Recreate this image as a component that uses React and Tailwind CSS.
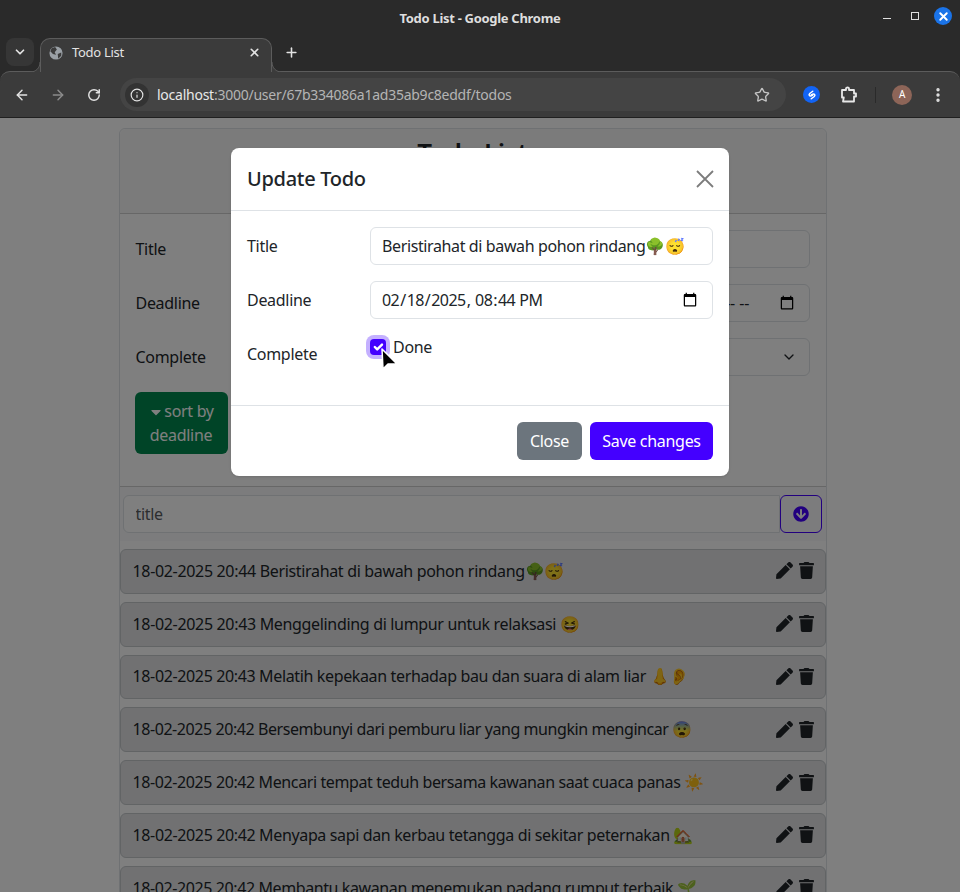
import React from 'react';
import { ArrowLeft, ArrowRight, ChevronDown, EllipsisVertical, Info, Plus, RotateCw, Star, X } from 'lucide-react';
import { FaArrowCircleDown, FaCaretDown, FaPen, FaTrash } from 'react-icons/fa';

const todos = [
    { text: '18-02-2025 20:44 Beristirahat di bawah pohon rindang🌳😴', fit: 'tracking-[-0.33px]' },
    { text: '18-02-2025 20:43 Menggelinding di lumpur untuk relaksasi 😆', fit: 'tracking-[-0.33px]' },
    { text: '18-02-2025 20:43 Melatih kepekaan terhadap bau dan suara di alam liar 👃👂', fit: 'tracking-[-0.36px]' },
    { text: '18-02-2025 20:42 Bersembunyi dari pemburu liar yang mungkin mengincar 😨', fit: 'tracking-[-0.43px]' },
    { text: '18-02-2025 20:42 Mencari tempat teduh bersama kawanan saat cuaca panas ☀️', fit: 'tracking-[-0.39px]' },
    { text: '18-02-2025 20:42 Menyapa sapi dan kerbau tetangga di sekitar peternakan 🏡', fit: 'tracking-[-0.36px]' },
    { text: '18-02-2025 20:42 Membantu kawanan menemukan padang rumput terbaik 🌱', fit: 'tracking-[-0.4px]' },
];

const BrowserChrome = () => (
    <div className="shrink-0 bg-[#2a2a2a] text-[#e3e3e3]">
        <div className="h-[36px] flex items-center justify-center relative text-[13px] font-bold text-[#dedede] pt-[1px]">
            Todo List - Google Chrome
            <div className="absolute right-[8px] top-[7px] flex items-center">
                <div className="w-[8px] h-[1px] bg-[#e0e0e0] mt-[5px] mr-[20px]"></div>
                <div className="w-[8px] h-[8px] border border-[#e0e0e0] mr-[15px]"></div>
                <div className="w-[18px] h-[18px] rounded-full bg-[#1a73e8] flex items-center justify-center">
                    <X className="w-[13px] h-[13px] text-white" strokeWidth={3.5} />
                </div>
            </div>
        </div>
        <div className="h-[35px] flex items-end pl-[6px] relative z-10">
            <div className="w-[28px] h-[28px] mb-[5px] rounded-lg bg-[#363636] flex items-center justify-center">
                <ChevronDown className="w-[14px] h-[14px]" strokeWidth={3} />
            </div>
            <div className="relative ml-[6px] w-[232px] h-[34px] -mb-[1px] pb-[6px] bg-[#3b3b3b] border border-b-0 border-[#5c5c5c] rounded-t-[10px] flex items-center pl-[8px] pr-[10px] text-[13px] text-[#e3e3e3]">
                <svg viewBox="0 0 16 16" className="w-[14px] h-[14px] shrink-0">
                    <circle cx="8" cy="8" r="7.5" fill="#9aa0a6" />
                    <path d="M3 2.5 L7 1 L9 4 L6.5 7 L8 10 L4.5 9 L1.5 6 Z M10 9 L14 7.5 L14 11 L10.5 14.5 Z" fill="#3b3b3b" />
                </svg>
                <span className="ml-[9px]">Todo List</span>
                <X className="w-[13px] h-[13px] ml-auto" strokeWidth={3} />
                <svg viewBox="0 0 10 10" className="absolute -left-[11px] bottom-0 w-[10px] h-[10px]">
                    <path d="M10 0 C10 6 6 10 0 10 L10 10 Z" fill="#3b3b3b" />
                    <path d="M10 0 C10 6 6 10 0 10" fill="none" stroke="#5c5c5c" />
                </svg>
                <svg viewBox="0 0 10 10" className="absolute -right-[11px] bottom-0 w-[10px] h-[10px]">
                    <path d="M0 0 C0 6 4 10 10 10 L0 10 Z" fill="#3b3b3b" />
                    <path d="M0 0 C0 6 4 10 10 10" fill="none" stroke="#5c5c5c" />
                </svg>
            </div>
            <Plus className="w-[15px] h-[15px] ml-[12px] mb-[11px]" strokeWidth={2.5} />
        </div>
        <div className="h-[47px] bg-[#3b3b3b] border-t border-[#5c5c5c] border-b-[#202020] border-b rounded-t-[10px] flex items-center pl-[14px]">
            <ArrowLeft className="w-[16px] h-[16px] shrink-0" strokeWidth={2.2} />
            <ArrowRight className="w-[16px] h-[16px] ml-[20px] text-[#8c8c8c] shrink-0" strokeWidth={2.2} />
            <RotateCw className="w-[14px] h-[14px] ml-[21px] shrink-0" strokeWidth={2.5} />
            <div className="ml-[19px] w-[666px] h-[33px] rounded-full bg-[#444444] flex items-center pl-[5px] pr-[16px] text-[14px] tracking-[-0.25px] shrink-0">
                <div className="w-[24px] h-[24px] rounded-full bg-[#333333] flex items-center justify-center shrink-0">
                    <Info className="w-[14px] h-[14px]" strokeWidth={2} />
                </div>
                <span className="ml-[8px] text-[#e8e8e8]">localhost<span className="text-[#b4b4b4]">:3000/user/67b334086a1ad35ab9c8eddf/todos</span></span>
                <Star className="w-[16px] h-[16px] ml-auto text-[#c4c4c4]" strokeWidth={2} />
            </div>
            <div className="ml-[17px] w-[17px] h-[17px] rounded-full bg-[#1264f5] flex items-center justify-center shrink-0">
                <svg viewBox="0 0 16 16" className="w-[12px] h-[12px]" fill="none" stroke="white" strokeWidth="2" strokeLinecap="round">
                    <path d="M9 3 L5 6 C3 8 5 10 7 9 L9 8" />
                    <path d="M7 13 L11 10 C13 8 11 6 9 7 L7 8" />
                </svg>
            </div>
            <svg viewBox="0 0 18 18" className="w-[18px] h-[18px] ml-[20px] shrink-0" fill="none" stroke="#e8e8e8" strokeWidth="1.8" strokeLinejoin="round">
                <path d="M2 4 H6 V2.5 C6 1 9 1 9 2.5 V4 H14 V7.5 H16 V10.5 H14 V15.5 H3 L3.8 11.5 H2 Z" />
            </svg>
            <div className="w-[1px] h-[16px] bg-[#2a2a2a] ml-[17px] shrink-0"></div>
            <div className="ml-[16px] w-[20px] h-[20px] rounded-full bg-[#8d6558] flex items-center justify-center text-[10px] text-white shrink-0">A</div>
            <EllipsisVertical className="w-[18px] h-[18px] ml-[17px] shrink-0" strokeWidth={2.5} />
        </div>
    </div>
);

const FormRow = ({ label, labelWidth, children }) => (
    <div className="flex items-start mb-[16px]">
        <label className={labelWidth + ' shrink-0 pt-[7px] leading-6 text-[#212529]'}>{label}</label>
        <div className="flex-1 min-w-0">{children}</div>
    </div>
);

const inputCls = 'w-full h-[38px] px-[12px] bg-white border border-[#dee2e6] rounded-md text-[#212529] outline-none';

const TodoCard = () => (
    <div className="w-[708px] mx-auto mt-[10px] bg-white border border-[#dee2e6] rounded-t-md pb-[8px]">
        <div className="h-[85px] bg-[#f7f7f7] border-b border-[#cfcfcf] rounded-t-md pt-[4px] text-center text-[26px] font-semibold text-[#212529]">Todo List</div>
        <div className="px-[16px] pt-[16px] h-[273px] border-b border-[#cfcfcf]">
            <FormRow label="Title" labelWidth="w-[455px]"><input className={inputCls} defaultValue="" /></FormRow>
            <FormRow label="Deadline" labelWidth="w-[455px]"><input type="datetime-local" className={inputCls} /></FormRow>
            <FormRow label="Complete" labelWidth="w-[455px]">
                <div className={inputCls + ' flex items-center justify-end pr-[12px]'}>
                    <ChevronDown className="w-[16px] h-[16px]" strokeWidth={2} />
                </div>
            </FormRow>
            <button className="w-[93px] h-[62px] -ml-[1px] rounded-md bg-[#00894f] text-white leading-6">
                <FaCaretDown className="inline w-[16px] h-[16px] align-[-3px]" />sort by deadline
            </button>
        </div>
        <div className="flex items-center bg-[#f8f9fa] pl-[3px] pr-[4px] py-[8px]">
            <input className="flex-1 h-[38px] px-[12px] bg-white border border-[#dee2e6] rounded-l-md placeholder:text-[#595c5f]" placeholder="title" />
            <button className="w-[42px] h-[38px] border border-[#4400ff] rounded-md flex items-center justify-center text-[#4400ff]">
                <FaArrowCircleDown className="w-[16px] h-[16px]" />
            </button>
        </div>
        <div className="flex flex-col gap-[8px] mt-[8px]">
            {todos.map((t, i) => (
                <div key={i} className={t.fit + ' h-[44.8px] pb-[1px] bg-[#e2e3e5] border border-[#c4c8cb] rounded-md flex items-center pl-[12px] pr-[11px] text-[#212529]'}>
                    <span>{t.text}</span>
                    <div className="ml-auto flex items-center gap-[6px] text-[#212529]">
                        <FaPen className="w-[17px] h-[17px]" />
                        <FaTrash className="w-[15px] h-[17px]" />
                    </div>
                </div>
            ))}
        </div>
    </div>
);

const UpdateModal = () => (
    <div className="absolute left-[231px] top-[30px] w-[498px] bg-white rounded-lg shadow-sm text-[#212529]">
        <div className="h-[63px] border-b border-[#dee2e6] flex items-center px-[16px]">
            <h5 className="text-[20px] font-medium">Update Todo</h5>
            <svg viewBox="0 0 18 18" className="w-[18px] h-[18px] ml-auto -mr-[1px]" fill="none" stroke="#7c7c7c" strokeWidth="1.8">
                <path d="M1 1 L17 17 M17 1 L1 17" />
            </svg>
        </div>
        <div className="px-[16px] pt-[16px] h-[195px] border-b border-[#dee2e6]">
            <FormRow label="Title" labelWidth="w-[123px]">
                <div className={inputCls + ' flex items-center pl-[11px] tracking-[-0.38px]'}>Beristirahat di bawah pohon rindang🌳😴</div>
            </FormRow>
            <FormRow label="Deadline" labelWidth="w-[123px]">
                <input type="datetime-local" className={inputCls + ' pl-[10px] tracking-[-0.55px]'} defaultValue="2025-02-18T20:44" />
            </FormRow>
            <div className="flex items-start">
                <div className="w-[123px] shrink-0 pt-[7px] leading-6">Complete</div>
                <div className="flex items-center gap-[7px] relative leading-6">
                    <span className="w-[16px] h-[16px] rounded-[4px] bg-[#4400ff] ring-4 ring-[#c4b0ff] flex items-center justify-center">
                        <svg viewBox="0 0 20 20" className="w-[16px] h-[16px]" fill="none" stroke="white" strokeWidth="3" strokeLinecap="round" strokeLinejoin="round">
                            <path d="m6 10 3 3 6-6" />
                        </svg>
                    </span>
                    Done
                    <svg viewBox="0 0 20 26" className="absolute left-[10px] top-[12px] w-[20px] h-[26px]">
                        <path d="M2 2 L3 22 L8 17 L17 17 Z" fill="black" stroke="white" strokeWidth="1.5" strokeLinejoin="round" />
                    </svg>
                </div>
            </div>
        </div>
        <div className="h-[70px] flex items-center justify-end gap-[8px] px-[16px]">
            <button className="h-[38px] w-[65px] rounded-md bg-[#6c757d] text-white">Close</button>
            <button className="h-[38px] w-[123px] rounded-md bg-[#4400ff] text-white">Save changes</button>
        </div>
    </div>
);

const App = () => {
    return (
        <div className="h-[892px] flex flex-col overflow-hidden bg-white text-[16px] font-['Noto_Sans',sans-serif] tracking-[-0.3px]">
            <BrowserChrome />
            <div className="relative flex-1 overflow-hidden pr-[15px]">
                <TodoCard />
                <div className="absolute inset-0 bg-black/50"></div>
                <UpdateModal />
            </div>
        </div>
    );
};

export default App;
